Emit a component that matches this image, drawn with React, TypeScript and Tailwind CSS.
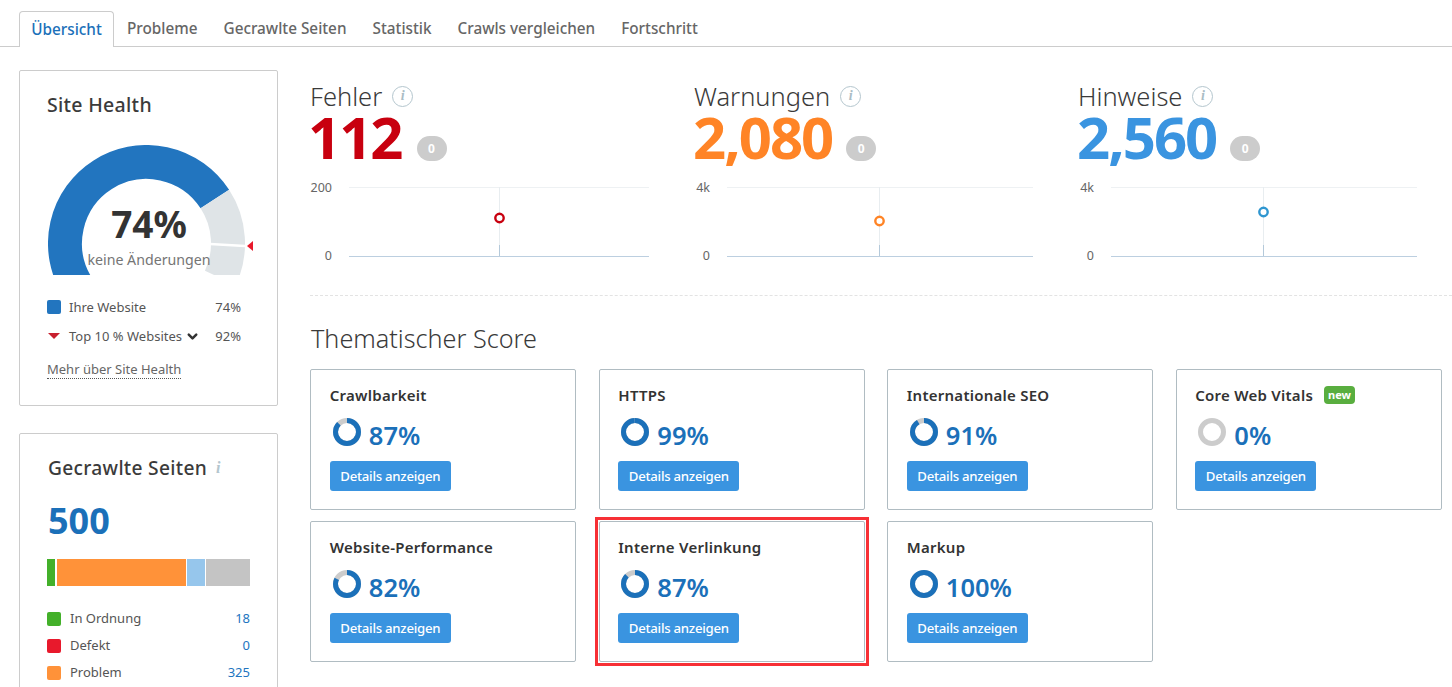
import { ChevronDown } from "lucide-react";

const FONT = "font-['Noto_Sans',sans-serif]";

const tabs = ["Übersicht", "Probleme", "Gecrawlte Seiten", "Statistik", "Crawls vergleichen", "Fortschritt"];

const stats = [
  { title: "Fehler", value: "112", color: "text-[#c8000f]", stroke: "#c8000f", top: "200", labelW: "w-[22px]", chartW: "w-[300px]", width: 300, shift: "-ml-[2px]", badge: "ml-[15px]", dotY: 31, mid: 150 },
  { title: "Warnungen", value: "2,080", color: "text-[#ff8426]", stroke: "#ff8426", top: "4k", labelW: "w-[16px]", chartW: "w-[306px]", width: 306, shift: "-ml-px", badge: "ml-[14px]", dotY: 34, mid: 152 },
  { title: "Hinweise", value: "2,560", color: "text-[#3a94e0]", stroke: "#2f96d0", top: "4k", labelW: "w-[16px]", chartW: "w-[306px]", width: 306, shift: "-ml-px", badge: "ml-[14px]", dotY: 25, mid: 152 },
];

const scores = [
  { title: "Crawlbarkeit", pct: 87 },
  { title: "HTTPS", pct: 99 },
  { title: "Internationale SEO", pct: 91 },
  { title: "Core Web Vitals", pct: 0, isNew: true },
  { title: "Website-Performance", pct: 82 },
  { title: "Interne Verlinkung", pct: 87, marked: true },
  { title: "Markup", pct: 100 },
];

const pageRows = [
  { label: "In Ordnung", value: "18", color: "bg-[#43b02a]" },
  { label: "Defekt", value: "0", color: "bg-[#e8192c]" },
  { label: "Problem", value: "325", color: "bg-[#ff9239]" },
];

function InfoIcon() {
  return (
    <span className="flex h-[21px] w-[21px] items-center justify-center rounded-full border-[1.5px] border-[#b4c6ce] bg-white font-['Liberation_Serif',serif] text-[14px] font-bold italic leading-none text-[#a9bcc5]">
      i
    </span>
  );
}

function Gauge() {
  const polar = (r: number, deg: number) => {
    const a = (deg * Math.PI) / 180;
    return [98.5 + r * Math.cos(a), 98.5 - r * Math.sin(a)];
  };
  const arc = (from: number, to: number, color: string) => {
    const [x1, y1] = polar(81.5, from);
    const [x2, y2] = polar(81.5, to);
    const large = from - to > 180 ? 1 : 0;
    return <path d={`M${x1} ${y1}A81.5 81.5 0 ${large} 1 ${x2} ${y2}`} fill="none" stroke={color} strokeWidth="34" />;
  };
  return (
    <div className="relative ml-[28px] mt-[26px] h-[130px] w-[210px] overflow-hidden">
      <svg width="210" height="130" viewBox="0 0 210 130" className="absolute left-0 top-0">
        {arc(212, 33, "#2275bf")}
        {arc(33, -25, "#dfe4e7")}
        <path d="M162 99 L197 101" stroke="#fff" strokeWidth="2.5" />
        <path d="M199 101 L205 96 L205 106 Z" fill="#e8192c" />
      </svg>
      <div className="absolute left-[36px] top-[56px] w-[130px] text-center text-[37px] font-bold leading-[46px] text-[#333]">74%</div>
      <div className="absolute left-px top-[103px] w-[200px] text-center text-[14.2px] leading-[24px] text-[#757575]">keine Änderungen</div>
    </div>
  );
}

function Ring({ pct }: { pct: number }) {
  const r = 11.5;
  const c = 2 * Math.PI * r;
  return (
    <svg width="30" height="30" viewBox="0 0 30 30" className="ml-[2px] mt-px shrink-0">
      <circle cx="15" cy="15" r={r} fill="none" stroke="#cccccc" strokeWidth="5" />
      <circle
        cx="15"
        cy="15"
        r={r}
        fill="none"
        stroke="#1b70b9"
        strokeWidth="5"
        strokeDasharray={`${(pct / 100) * c} ${c}`}
        transform="rotate(-90 15 15)"
      />
    </svg>
  );
}

function ScoreCard({ title, pct, isNew, marked }: { title: string; pct: number; isNew?: boolean; marked?: boolean }) {
  return (
    <div className="relative h-[141px] rounded-[2px] border border-[#b0bcc2] bg-white pl-[18.8px] pt-[14px]">
      {marked && <div className="absolute -inset-[5px] border-[3px] border-[#f73035]" />}
      <div className="flex h-[22px] items-center">
        <span className="text-[15px] font-semibold leading-[22px] tracking-[0.25px] text-[#333]">{title}</span>
        {isNew && (
          <span className="ml-[11px] rounded-[4px] bg-[#59ae3f] px-[4px] text-[11px] font-bold leading-[18px] text-white">new</span>
        )}
      </div>
      <div className="mt-[10px] flex h-[30px] items-center">
        <Ring pct={pct} />
        <span className="ml-[7px] mt-[7px] text-[25.5px] font-semibold leading-[30px] text-[#1b70b9]">{pct}%</span>
      </div>
      <button className="mt-[15px] block h-[30px] w-[121px] rounded-[3px] bg-[#3a94e0] text-center text-[13.2px] font-medium leading-[30px] tracking-[-0.25px] text-white">
        Details anzeigen
      </button>
    </div>
  );
}

function StatChart({ s }: { s: (typeof stats)[number] }) {
  return (
    <div className="mt-[19px] flex h-[72px]">
      <div className={`${s.labelW} mr-[17px] flex h-full flex-col justify-between text-right text-[12.5px] leading-[16px] text-[#666]`}>
        <span className="-mt-[7px]">{s.top}</span>
        <span className="-mb-[5px]">0</span>
      </div>
      <svg className={s.chartW} height="72" viewBox={`0 0 ${s.width} 72`}>
        <path d={`M0 .5H${s.width}`} stroke="#eef1f3" />
        <path d={`M${s.mid + 0.5} 0V69`} stroke="#e8edf0" />
        <path d={`M${s.mid + 0.5} 58V69`} stroke="#b4c9da" />
        <path d={`M0 69.5H${s.width}`} stroke="#bccfe0" />
        <circle cx={s.mid + 0.5} cy={s.dotY} r="4.2" fill="#fff" stroke={s.stroke} strokeWidth="2.4" />
      </svg>
    </div>
  );
}

export default function App() {
  return (
    <div className={`${FONT} h-[687px] w-[1452px] overflow-hidden bg-white`}>
      <div className="flex h-[47px] items-end border-b border-[#cccccc] pl-[19px]">
        {tabs.map((tab, i) => (
          <div
            key={tab}
            className={
              i === 0
                ? "-mb-px h-[36px] w-[95px] rounded-t-[4px] border border-b-0 border-[#cccccc] bg-white text-center text-[15.3px] font-medium leading-[35px] text-[#1b70b9]"
                : "h-[36px] px-[13px] text-[15.3px] font-medium leading-[36px] text-[#666]"
            }
          >
            {tab}
          </div>
        ))}
      </div>

      <div className="flex items-start pl-[19px] pt-[23px]">
        <aside className="w-[259px] shrink-0">
          <section className="h-[336px] rounded-[2px] border border-[#cccccc] bg-white">
            <h2 className="pl-[27px] pt-[20px] text-[19.5px] font-medium leading-[28px] tracking-[0.3px] text-[#3b3b3b]">Site Health</h2>
            <Gauge />
            <div className="mt-[22px] flex h-[20px] items-center pl-[27px] pr-[36px] text-[13px] leading-[20px] text-[#555]">
              <span className="h-[14px] w-[14px] rounded-[2px] bg-[#2275bf]" />
              <span className="ml-[8px]">Ihre Website</span>
              <span className="ml-auto">74%</span>
            </div>
            <div className="mt-[9px] flex h-[20px] items-center pl-[27px] pr-[36px] text-[13px] leading-[20px] text-[#555]">
              <svg width="14" height="8" viewBox="0 0 14 8"><path d="M1 1H13L7 7Z" fill="#c8202f" /></svg>
              <span className="ml-[8px] whitespace-nowrap">Top 10 % Websites</span>
              <ChevronDown size={15} strokeWidth={4} className="ml-[3px] text-[#333]" />
              <span className="ml-auto">92%</span>
            </div>
            <div className="ml-[27px] mt-[15px] w-fit border-b border-dotted border-[#555] text-[13px] leading-[17px] text-[#666]">Mehr über Site Health</div>
          </section>

          <section className="mt-[27px] h-[320px] rounded-[2px] border border-[#cccccc] bg-white px-[27px]">
            <h2 className="ml-px flex items-center pt-[20px] text-[19.2px] font-medium leading-[28px] tracking-[0.3px] text-[#3b3b3b]">
              Gecrawlte Seiten
              <span className="ml-[9px] font-['Liberation_Serif',serif] text-[16px] font-bold italic text-[#b4c6ce]">i</span>
            </h2>
            <div className="ml-px mt-[16px] text-[36px] font-bold leading-[46px] text-[#1b70b9]">500</div>
            <div className="mt-[15px] flex h-[27px] w-[203px] gap-[1px]">
              <div className="w-[8px] bg-[#43b02a]" />
              <div className="ml-[1px] w-[129px] bg-[#ff9239]" />
              <div className="w-[18px] bg-[#96c6ec]" />
              <div className="flex-1 bg-[#c4c4c4]" />
            </div>
            <div className="mt-[19px] w-[203px]">
              {pageRows.map((row) => (
                <div key={row.label} className="flex h-[27px] items-center text-[13px] text-[#555]">
                  <span className={`h-[14px] w-[14px] rounded-[2px] ${row.color}`} />
                  <span className="ml-[9px]">{row.label}</span>
                  <span className="ml-auto text-[#2275bf]">{row.value}</span>
                </div>
              ))}
            </div>
          </section>
        </aside>

        <main className="ml-[32px] min-w-0 flex-1">
          <div className="grid grid-cols-[384px_384px_1fr] pt-[9px]">
            {stats.map((s) => (
              <div key={s.title}>
                <div className="flex h-[34px] items-center">
                  <span className="text-[25.5px] font-light leading-[34px] text-[#3a3a3a]">{s.title}</span>
                  <span className="ml-[10px]"><InfoIcon /></span>
                </div>
                <div className="flex h-[55px] items-start">
                  <span className={`${s.color} ${s.shift} mt-[2px] text-[58px] font-bold leading-[44px] tracking-[-2px]`}>{s.value}</span>
                  <span className={`${s.badge} mt-[23px] h-[25px] w-[30px] rounded-full bg-[#cccccc] text-center text-[12px] font-bold leading-[25px] text-white`}>0</span>
                </div>
                <StatChart s={s} />
              </div>
            ))}
          </div>

          <div className="mt-[36px] border-t border-dashed border-[#e3e3e3]" />
          <h2 className="mt-[24px] pl-px text-[25.2px] font-light leading-[36px] text-[#3a3a3a]">Thematischer Score</h2>
          <div className="mt-[13px] grid grid-cols-[266px_266px_266px_266px] gap-x-[22.5px] gap-y-[11px]">
            {scores.map((s) => (
              <ScoreCard key={s.title} {...s} />
            ))}
          </div>
        </main>
      </div>
    </div>
  );
}
